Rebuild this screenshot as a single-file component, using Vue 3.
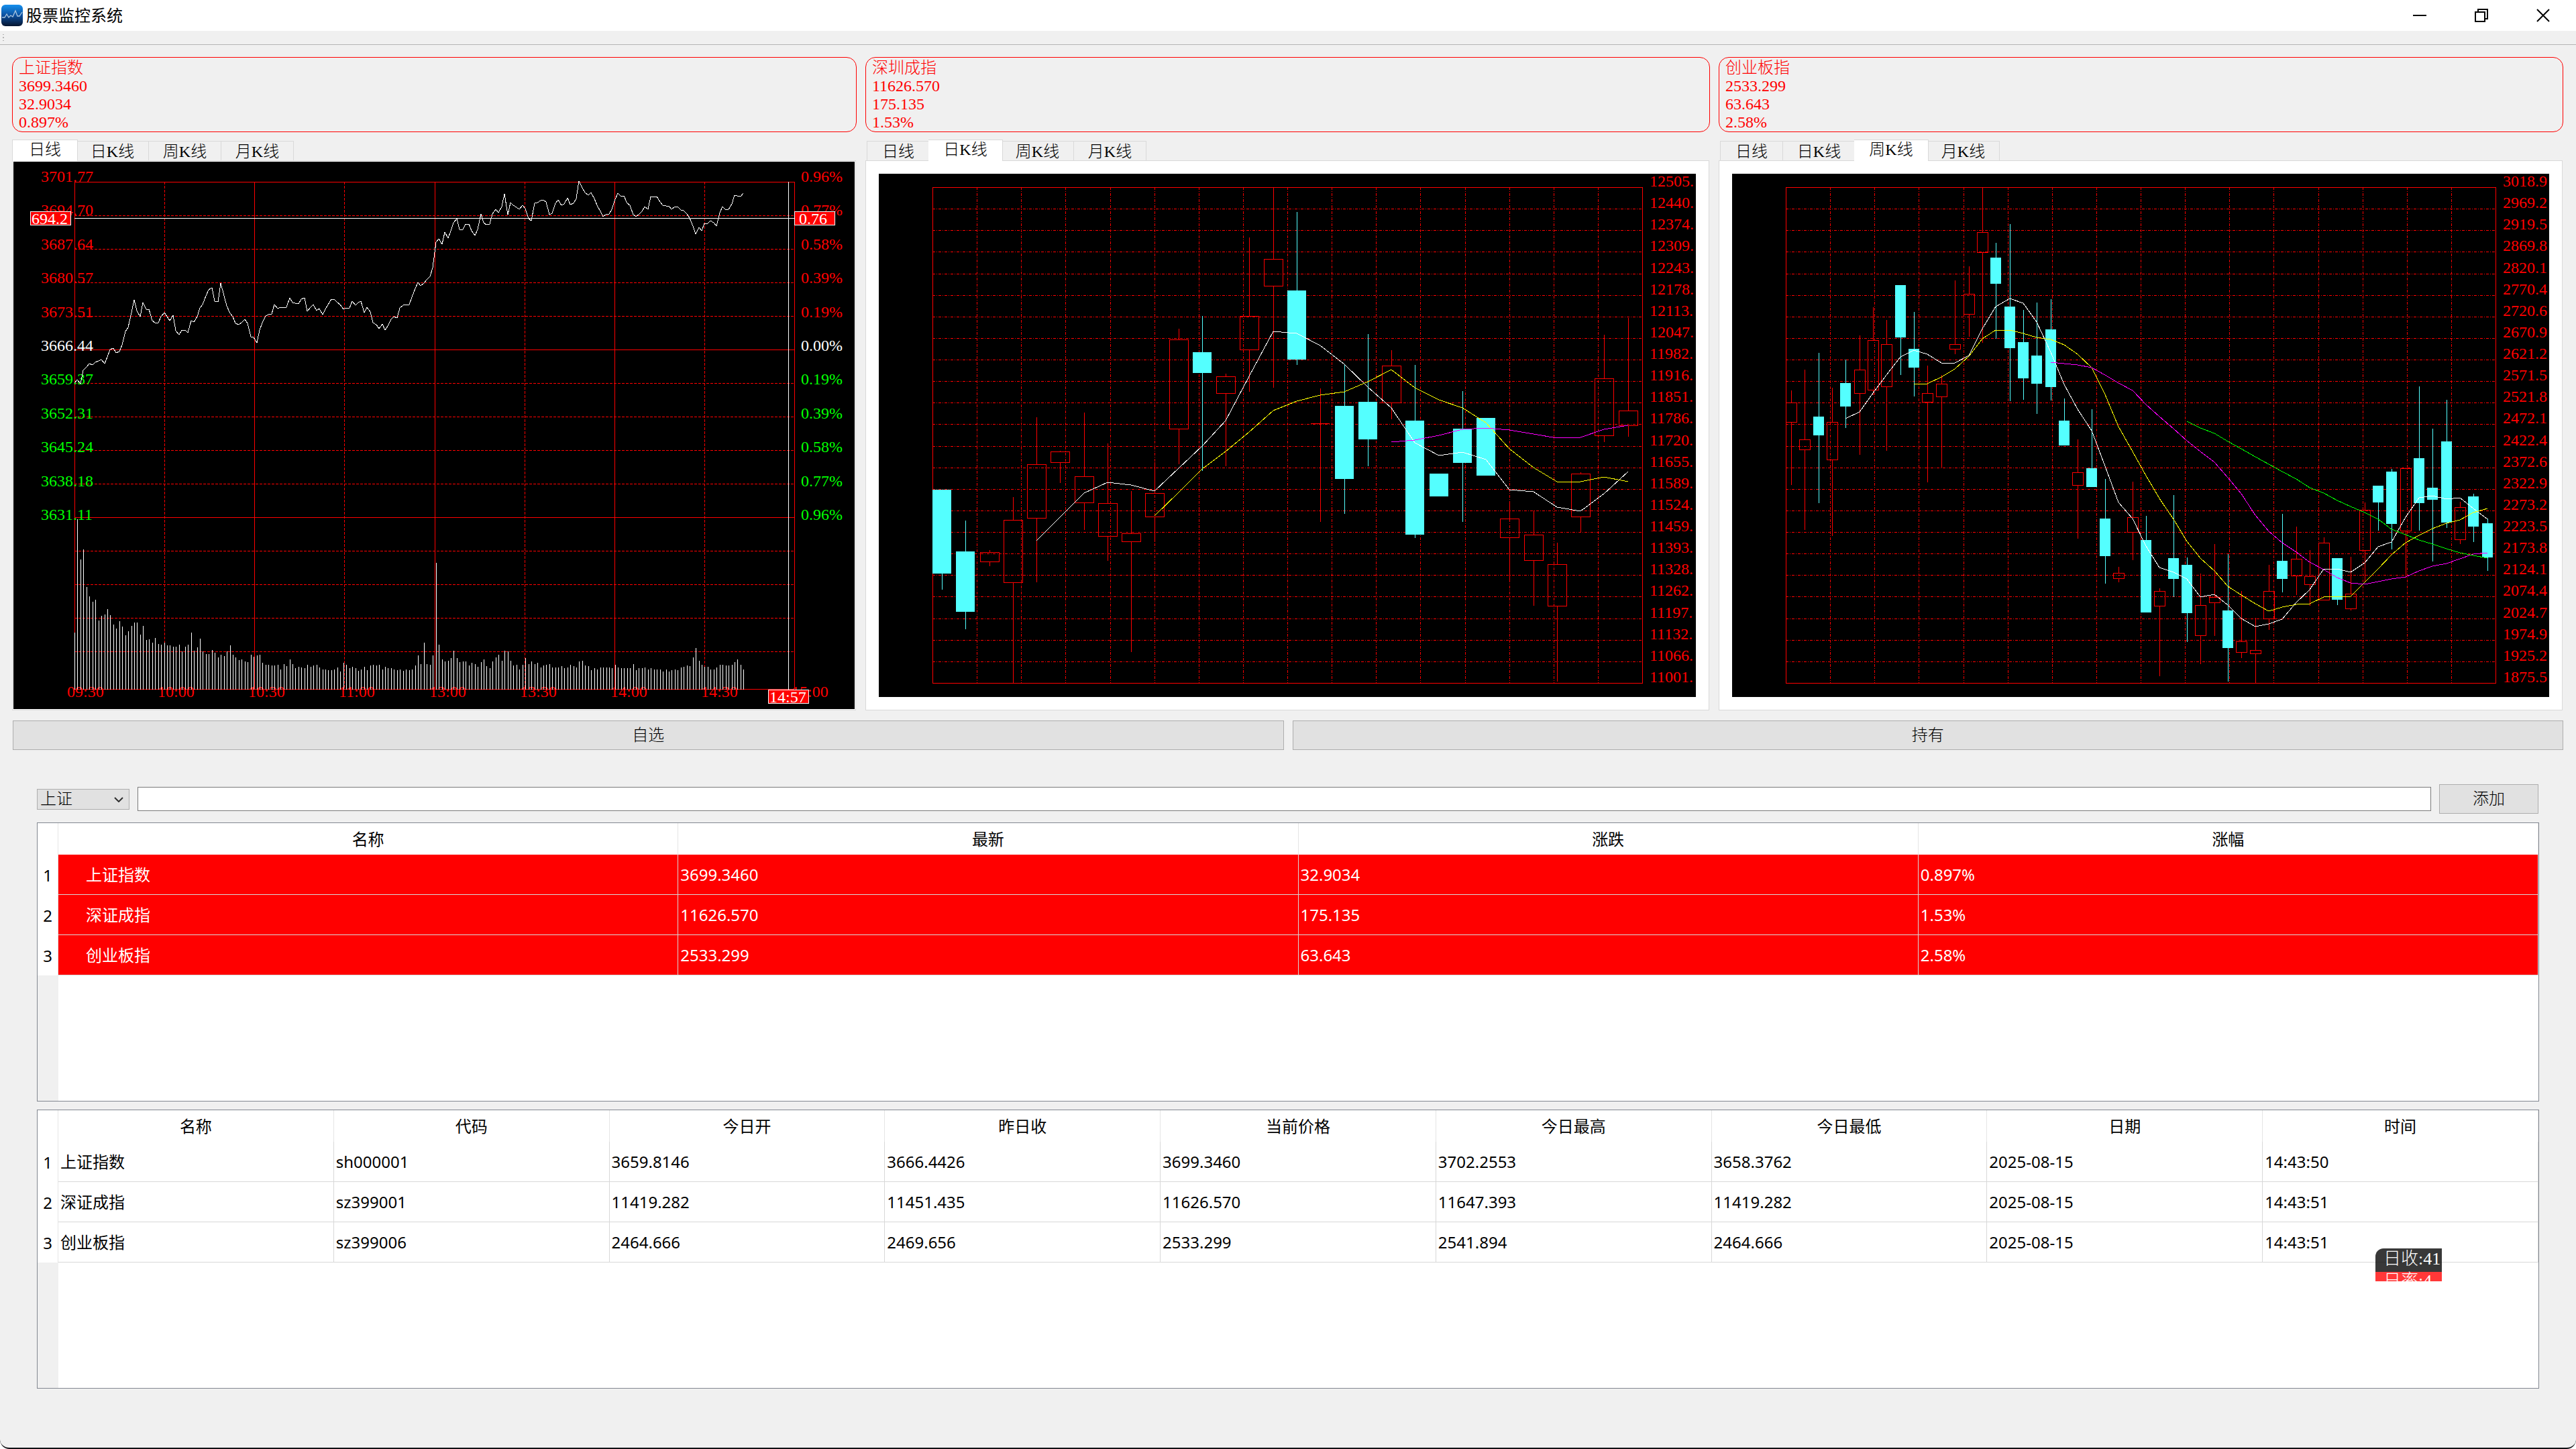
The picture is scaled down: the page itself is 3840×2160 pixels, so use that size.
<script setup>
import { ref } from 'vue'

const indexes = [
  { name: '上证指数', price: '3699.3460', change: '32.9034', percent: '0.897%' },
  { name: '深圳成指', price: '11626.570', change: '175.135', percent: '1.53%' },
  { name: '创业板指', price: '2533.299', change: '63.643', percent: '2.58%' }
]

const tabNames = ['日线', '日K线', '周K线', '月K线']
const activeTabs = ref([0, 1, 2])

const watchHead = ['名称', '最新', '涨跌', '涨幅']
const watchRows = [
  ['上证指数', '3699.3460', '32.9034', '0.897%'],
  ['深证成指', '11626.570', '175.135', '1.53%'],
  ['创业板指', '2533.299', '63.643', '2.58%']
]

const quoteHead = ['名称', '代码', '今日开', '昨日收', '当前价格', '今日最高', '今日最低', '日期', '时间']
const quoteRows = [
  ['上证指数', 'sh000001', '3659.8146', '3666.4426', '3699.3460', '3702.2553', '3658.3762', '2025-08-15', '14:43:50'],
  ['深证成指', 'sz399001', '11419.282', '11451.435', '11626.570', '11647.393', '11419.282', '2025-08-15', '14:43:51'],
  ['创业板指', 'sz399006', '2464.666', '2469.656', '2533.299', '2541.894', '2464.666', '2025-08-15', '14:43:51']
]

const market = ref('上证')
const keyword = ref('')

/* ---- intraday chart: one level per minute, 77 is the top gridline and 1489 the time axis ---- */
const day = { left: 91, right: 1164, top: 30, bottom: 786 }
const dayY = (v) => Math.round(day.top + ((v - 77) * (day.bottom - day.top)) / 1412)
const dayX = (i) => Math.round(day.left + (i * (day.right - day.left)) / 241)

const minutePrices = [
  637, 628, 639, 601, 593, 583, 586, 580, 576, 572, 584, 564, 544, 540, 553, 549, 530, 493, 482, 441,
  406, 435, 453, 414, 432, 432, 463, 469, 469, 453, 441, 452, 464, 448, 492, 502, 489, 490, 497, 463,
  468, 452, 428, 419, 394, 378, 372, 409, 411, 359, 394, 422, 444, 452, 472, 474, 469, 460, 471, 508,
  511, 526, 489, 469, 450, 447, 445, 418, 430, 427, 427, 426, 400, 414, 415, 417, 404, 400, 437, 426,
  418, 436, 430, 446, 432, 418, 404, 404, 413, 418, 432, 428, 428, 410, 420, 413, 410, 442, 427, 440,
  469, 475, 486, 473, 489, 479, 460, 452, 457, 428, 420, 419, 418, 399, 374, 358, 366, 359, 350, 340,
  317, 245, 236, 250, 218, 233, 213, 190, 179, 210, 210, 195, 195, 214, 226, 210, 167, 190, 197, 195,
  167, 154, 163, 147, 111, 169, 135, 143, 148, 153, 143, 152, 180, 185, 136, 134, 129, 128, 133, 169,
  165, 136, 128, 142, 138, 121, 140, 136, 123, 75, 94, 106, 115, 107, 124, 143, 160, 174, 167, 167,
  154, 125, 109, 118, 117, 137, 143, 168, 174, 169, 160, 147, 153, 118, 118, 118, 133, 142, 145, 145,
  154, 147, 146, 155, 158, 166, 178, 200, 222, 204, 213, 193, 192, 185, 191, 200, 163, 147, 155, 153,
  138, 115, 116, 118, 109
]
const minuteVolumes = [
  1333, 1017, 1129, 1101, 1206, 1232, 1247, 1241, 1299, 1286, 1281, 1266, 1284, 1309, 1320, 1301, 1316, 1340, 1329, 1314,
  1305, 1305, 1338, 1314, 1353, 1351, 1361, 1347, 1363, 1365, 1361, 1368, 1368, 1372, 1372, 1366, 1385, 1372, 1365, 1333,
  1383, 1374, 1348, 1385, 1391, 1391, 1381, 1389, 1402, 1394, 1398, 1385, 1368, 1393, 1402, 1409, 1406, 1413, 1415, 1394,
  1400, 1396, 1393, 1417, 1422, 1422, 1424, 1424, 1422, 1435, 1419, 1426, 1407, 1419, 1432, 1428, 1430, 1432, 1422, 1428,
  1424, 1421, 1430, 1434, 1434, 1437, 1437, 1435, 1430, 1441, 1417, 1421, 1432, 1428, 1432, 1439, 1435, 1428, 1437, 1424,
  1422, 1424, 1422, 1434, 1428, 1432, 1432, 1434, 1437, 1434, 1439, 1434, 1437, 1434, 1424, 1396, 1419, 1361, 1419, 1421,
  1396, 1137, 1366, 1406, 1413, 1411, 1404, 1383, 1404, 1415, 1413, 1413, 1424, 1417, 1419, 1428, 1415, 1407, 1426, 1432,
  1413, 1402, 1394, 1411, 1383, 1385, 1411, 1424, 1422, 1434, 1421, 1404, 1419, 1413, 1419, 1417, 1430, 1424, 1421, 1419,
  1430, 1430, 1430, 1426, 1432, 1430, 1422, 1426, 1430, 1413, 1411, 1424, 1426, 1437, 1432, 1434, 1430, 1430, 1430, 1430,
  1432, 1421, 1430, 1432, 1432, 1432, 1432, 1419, 1437, 1432, 1432, 1430, 1435, 1432, 1434, 1434, 1435, 1441, 1435, 1441,
  1437, 1435, 1437, 1430, 1428, 1424, 1426, 1402, 1376, 1411, 1422, 1428, 1428, 1434, 1434, 1430, 1422, 1422, 1424, 1424,
  1422, 1415, 1406, 1422, 1435
]
const dayLine = minutePrices.map((v, i) => `${dayX(i)},${dayY(v)}`).join(' ')
const dayBars = minuteVolumes.map((v, i) => `M${dayX(i)} ${day.bottom + 1}V${dayY(v)}`).join('')

const dayRows = Array.from({ length: 15 }, (_, i) => ({ y: 30 + i * 50, solid: i % 5 === 0 }))
const dayCols = Array.from({ length: 9 }, (_, i) => ({ x: Math.round(91 + i * 134.125), solid: i % 2 === 0 }))
const dayLabelY = (i) => Math.round(30 + i * 50.4)
const tone = (i) => (i < 5 ? '#ff0000' : i === 5 ? '#ffffff' : '#00ff00')
const dayPrices = ['3701.77', '3694.70', '3687.64', '3680.57', '3673.51', '3666.44', '3659.37', '3652.31', '3645.24', '3638.18', '3631.11']
const dayPercents = ['0.96%', '0.77%', '0.58%', '0.39%', '0.19%', '0.00%', '0.19%', '0.39%', '0.58%', '0.77%', '0.96%']
const dayTimes = ['09:30', '10:00', '10:30', '11:00', '13:00', '13:30', '14:00', '14:30', '15:00']

/* ---- candle charts: levels run from 145 (top gridline) to 1493 (bottom gridline) ---- */
const plot = { left: 80, right: 1138, top: 20, bottom: 759 }
const levelY = (v) => Math.round(plot.top + ((v - 145) * (plot.bottom - plot.top)) / 1348)

/* each candle: kind (r = rising, c = falling), high, body top, body bottom, low */
const dailyCandles = [
  ['c', 968, 968, 1196, 1240], ['c', 1052, 1136, 1300, 1347], ['r', 1132, 1137, 1162, 1176],
  ['r', 988, 1049, 1219, 1493], ['r', 771, 898, 1044, 1220], ['r', 861, 863, 892, 950],
  ['r', 758, 931, 1002, 1078], ['r', 841, 1004, 1093, 1161], ['r', 972, 1086, 1108, 1409],
  ['r', 892, 976, 1040, 1109], ['r', 529, 559, 801, 899], ['c', 496, 593, 651, 916],
  ['r', 653, 659, 705, 904], ['r', 281, 495, 586, 702], ['r', 145, 340, 413, 690],
  ['c', 213, 425, 614, 629], ['r', 693, 787, 787, 1056], ['c', 626, 740, 939, 1034],
  ['c', 545, 729, 831, 904], ['r', 589, 630, 730, 777], ['c', 629, 780, 1090, 1099],
  ['c', 923, 923, 986, 986], ['c', 700, 802, 895, 1056], ['c', 773, 773, 930, 930],
  ['r', 1000, 1046, 1098, 1216], ['r', 1025, 1089, 1160, 1284], ['r', 1112, 1170, 1283, 1490],
  ['r', 921, 923, 1040, 1085], ['r', 547, 664, 819, 839], ['r', 500, 752, 792, 824]
]
const dailyAverages = [
  { color: '#ffffff', start: 4, values: [1106, 1042, 976, 948, 955, 972, 910, 849, 780, 660, 537, 542, 575, 626, 688, 746, 840, 875, 866, 886, 968, 973, 1016, 1026, 978, 919] },
  { color: '#ffff00', start: 9, values: [1038, 975, 911, 864, 810, 753, 726, 711, 702, 674, 641, 691, 724, 746, 786, 857, 907, 945, 946, 933, 945] },
  { color: '#ff00ff', start: 19, values: [839, 833, 819, 804, 799, 806, 817, 828, 825, 804, 792] }
]
const dailyLabels = ['12505.', '12440.', '12374.', '12309.', '12243.', '12178.', '12113.', '12047.', '11982.', '11916.', '11851.', '11786.', '11720.', '11655.', '11589.', '11524.', '11459.', '11393.', '11328.', '11262.', '11197.', '11132.', '11066.', '11001.']

const weeklyCandles = [
  ['r', 698, 730, 783, 954], ['r', 642, 831, 858, 1078], ['c', 596, 768, 819, 1005],
  ['r', 691, 783, 885, 1093], ['c', 614, 678, 742, 800], ['r', 549, 641, 705, 873],
  ['r', 471, 561, 695, 711], ['r', 507, 572, 686, 861], ['c', 412, 412, 554, 655],
  ['c', 485, 585, 636, 715], ['r', 631, 705, 728, 948], ['r', 655, 679, 714, 907],
  ['r', 399, 572, 584, 600], ['r', 361, 435, 489, 552], ['r', 145, 267, 322, 568],
  ['c', 297, 337, 408, 557], ['c', 246, 469, 582, 727], ['c', 478, 567, 665, 724],
  ['c', 459, 603, 680, 762], ['c', 450, 531, 689, 725], ['c', 720, 780, 848, 848],
  ['r', 831, 920, 955, 1101], ['c', 748, 910, 961, 961], ['c', 939, 1047, 1149, 1223],
  ['r', 1178, 1193, 1208, 1220], ['r', 946, 1042, 1082, 1160], ['c', 1039, 1105, 1302, 1302],
  ['r', 1236, 1244, 1284, 1475], ['c', 983, 1154, 1211, 1260], ['c', 1152, 1172, 1304, 1382],
  ['r', 1196, 1281, 1363, 1442], ['r', 1116, 1260, 1275, 1366], ['c', 1143, 1296, 1398, 1490],
  ['r', 1243, 1379, 1410, 1426], ['r', 1316, 1403, 1412, 1493], ['r', 1172, 1243, 1317, 1349],
  ['c', 1034, 1161, 1211, 1247], ['r', 1068, 1155, 1202, 1254], ['r', 1132, 1203, 1224, 1284],
  ['r', 1098, 1111, 1266, 1266], ['c', 1154, 1154, 1267, 1282], ['r', 1150, 1250, 1290, 1296],
  ['r', 1003, 1022, 1131, 1220], ['c', 957, 957, 1003, 1079], ['c', 912, 919, 1061, 1130],
  ['r', 908, 909, 1079, 1207], ['c', 686, 882, 1005, 1079], ['c', 802, 963, 995, 1163],
  ['c', 724, 837, 1057, 1072], ['r', 1001, 1015, 1102, 1116], ['c', 979, 986, 1068, 1110],
  ['c', 1047, 1059, 1152, 1189]
]
const weeklyAverages = [
  { color: '#ffffff', start: 4, values: [775, 756, 705, 656, 606, 588, 600, 622, 622, 602, 530, 469, 447, 461, 511, 594, 682, 749, 808, 904, 1003, 1046, 1120, 1179, 1192, 1211, 1259, 1253, 1281, 1318, 1340, 1333, 1320, 1275, 1240, 1182, 1183, 1192, 1166, 1123, 1110, 1043, 990, 984, 993, 989, 1018, 1048] },
  { color: '#ffff00', start: 9, values: [679, 679, 661, 640, 604, 557, 534, 534, 542, 553, 559, 573, 599, 636, 708, 796, 863, 930, 991, 1048, 1109, 1154, 1188, 1230, 1254, 1277, 1297, 1287, 1279, 1278, 1260, 1258, 1257, 1220, 1182, 1145, 1111, 1092, 1074, 1059, 1050, 1030, 1019] },
  { color: '#ff00ff', start: 19, values: [621, 625, 629, 636, 655, 678, 698, 736, 769, 802, 835, 863, 892, 934, 979, 1037, 1080, 1111, 1138, 1164, 1185, 1206, 1221, 1225, 1218, 1210, 1205, 1189, 1176, 1168, 1156, 1143, 1139] },
  { color: '#00ff00', start: 29, values: [782, 800, 815, 836, 856, 878, 898, 919, 938, 962, 977, 997, 1014, 1029, 1048, 1075, 1090, 1105, 1115, 1129, 1140, 1147, 1153] }
]
const weeklyLabels = ['3018.9', '2969.2', '2919.5', '2869.8', '2820.1', '2770.4', '2720.6', '2670.9', '2621.2', '2571.5', '2521.8', '2472.1', '2422.4', '2372.6', '2322.9', '2273.2', '2223.5', '2173.8', '2124.1', '2074.4', '2024.7', '1974.9', '1925.2', '1875.5']

function buildChart(title, candles, averages, labels) {
  const step = (plot.right - plot.left) / candles.length
  const width = Math.round(step * 0.8)
  const center = (i) => Math.round(plot.left + i * step + width / 2)
  return {
    title,
    candles: candles.map(([kind, high, top, bottom, low], i) => ({
      kind,
      x: Math.round(plot.left + i * step),
      y: levelY(top),
      width,
      height: levelY(bottom) - levelY(top),
      wick: `M${center(i)} ${levelY(high)}V${levelY(top)}M${center(i)} ${levelY(bottom)}V${levelY(low)}`
    })),
    lines: averages.map((a) => ({
      color: a.color,
      points: a.values.map((v, i) => `${center(a.start + i)},${levelY(v)}`).join(' ')
    })),
    labels: labels.map((text, i) => ({ text, y: Math.round(plot.top + (i * (plot.bottom - plot.top)) / 23) })),
    cols: Array.from({ length: 15 }, (_, i) => Math.round(plot.left + ((i + 1) * (plot.right - plot.left)) / 16))
  }
}

const candleCharts = [
  null,
  buildChart('深圳成指日K线', dailyCandles, dailyAverages, dailyLabels),
  buildChart('创业板指周K线', weeklyCandles, weeklyAverages, weeklyLabels)
]
</script>

<template>
  <div class="window">
    <header class="titlebar">
      <svg class="logo" viewBox="0 0 32 32" aria-hidden="true">
        <defs>
          <linearGradient id="logo-fill" x1="0" y1="0" x2="0" y2="1">
            <stop offset="0" stop-color="#1590ee" />
            <stop offset="0.5" stop-color="#0c4f9e" />
            <stop offset="1" stop-color="#06142e" />
          </linearGradient>
        </defs>
        <rect width="32" height="32" rx="6" fill="url(#logo-fill)" />
        <path d="M1 19h4l3-5 3 5 3-3 3 2 4-9 3 8 3 0 4-6" fill="none" stroke="#a9c4de" stroke-width="1.3" />
      </svg>
      <h1>股票监控系统</h1>
      <div class="controls">
        <button type="button" aria-label="最小化">
          <svg viewBox="0 0 20 20"><path d="M0 10h20" /></svg>
        </button>
        <button type="button" aria-label="还原">
          <svg viewBox="0 0 20 20"><path d="M1 5h14v14H1zM5 5V1h14v14h-4" /></svg>
        </button>
        <button type="button" aria-label="关闭">
          <svg viewBox="0 0 20 20"><path d="M1 1l18 18M19 1L1 19" /></svg>
        </button>
      </div>
    </header>

    <div class="toolbar"><i></i><i></i><i></i></div>

    <section class="cards">
      <article v-for="item in indexes" :key="item.name" class="card">
        <p>{{ item.name }}</p>
        <p>{{ item.price }}</p>
        <p>{{ item.change }}</p>
        <p>{{ item.percent }}</p>
      </article>
    </section>

    <section class="charts">
      <div v-for="(active, n) in activeTabs" :key="n" class="chart">
        <div class="tabs" role="tablist">
          <button
            v-for="(tab, t) in tabNames"
            :key="tab"
            type="button"
            role="tab"
            :aria-selected="t === active"
            :class="['tab', { active: t === active, short: t === 0 }]"
          >{{ tab }}</button>
        </div>

        <div v-if="n === 0" class="pane flush">
          <svg class="canvas" viewBox="0 0 1254 816" role="img" aria-label="上证指数日线">
            <rect width="1254" height="816" fill="#000" />
            <g class="grid">
              <line v-for="r in dayRows" :key="r.y" :x1="91" :x2="1164" :y1="r.y" :y2="r.y" :class="{ dash: !r.solid }" />
              <line x1="91" x2="1164" y1="786" y2="786" />
              <line v-for="c in dayCols" :key="c.x" :x1="c.x" :x2="c.x" :y1="30" :y2="786" :class="{ dash: !c.solid }" />
            </g>
            <g class="axis">
              <text v-for="(p, i) in dayPrices" :key="p" x="41" :y="dayLabelY(i)" :fill="tone(i)">{{ p }}</text>
              <text v-for="(p, i) in dayPercents" :key="i" x="1174" :y="dayLabelY(i)" :fill="tone(i)">{{ p }}</text>
              <text v-for="(t, i) in dayTimes" :key="t" :x="80 + i * 135" y="798" fill="#ff0000">{{ t }}</text>
            </g>
            <path class="bars" :d="dayBars" />
            <polyline class="trace" :points="dayLine" stroke="#fff" />
            <path class="cursor" d="M91 84H1164M1155 30V787" />
            <g class="tag">
              <rect x="25" y="74" width="60" height="20" />
              <rect x="1164" y="74" width="60" height="20" />
              <rect x="1125" y="787" width="60" height="20" />
              <text x="27" y="93">694.2</text>
              <text x="1171" y="93">0.76</text>
              <text x="1127" y="806">14:57</text>
            </g>
          </svg>
        </div>

        <div v-else class="pane">
          <svg class="canvas" viewBox="0 0 1218 780" role="img" :aria-label="candleCharts[n].title">
            <rect width="1218" height="780" fill="#000" />
            <g class="grid">
              <line v-for="l in candleCharts[n].labels.slice(1, -1)" :key="l.y" x1="80" x2="1138" :y1="l.y" :y2="l.y" class="dashdot" />
              <line v-for="x in candleCharts[n].cols" :key="x" :x1="x" :x2="x" y1="20" y2="759" class="dashdot" />
              <rect x="80" y="20" width="1058" height="739" fill="none" />
            </g>
            <g v-for="(c, i) in candleCharts[n].candles" :key="i" :class="c.kind === 'c' ? 'fall' : 'rise'">
              <path :d="c.wick" />
              <rect v-if="c.height" :x="c.x" :y="c.y" :width="c.width" :height="c.height" />
              <line v-else :x1="c.x" :x2="c.x + c.width" :y1="c.y" :y2="c.y" />
            </g>
            <polyline v-for="l in candleCharts[n].lines" :key="l.color" class="trace" :points="l.points" :stroke="l.color" />
            <g class="axis">
              <text v-for="l in candleCharts[n].labels" :key="l.y" x="1149" :y="l.y - 1" fill="#ff0000">{{ l.text }}</text>
            </g>
          </svg>
        </div>
      </div>
    </section>

    <nav class="switch">
      <button type="button" class="push">自选</button>
      <button type="button" class="push">持有</button>
    </nav>

    <main class="panel">
      <form class="entry" @submit.prevent>
        <span class="combo">
          <select v-model="market" aria-label="市场">
            <option>上证</option>
            <option>深证</option>
          </select>
          <svg viewBox="0 0 14 8" aria-hidden="true"><path d="M1 1l6 6 6-6" /></svg>
        </span>
        <input v-model="keyword" type="text" aria-label="股票代码" />
        <button type="submit" class="push add">添加</button>
      </form>

      <div class="frame">
        <table class="watch">
          <thead>
            <tr>
              <th class="no"></th>
              <th v-for="h in watchHead" :key="h" scope="col">{{ h }}</th>
            </tr>
          </thead>
          <tbody>
            <tr v-for="(row, r) in watchRows" :key="r">
              <th class="no" scope="row">{{ r + 1 }}</th>
              <td v-for="(cell, c) in row" :key="c">{{ cell }}</td>
            </tr>
          </tbody>
        </table>
      </div>

      <div class="frame">
        <table>
          <thead>
            <tr>
              <th class="no"></th>
              <th v-for="h in quoteHead" :key="h" scope="col">{{ h }}</th>
            </tr>
          </thead>
          <tbody>
            <tr v-for="(row, r) in quoteRows" :key="r">
              <th class="no" scope="row">{{ r + 1 }}</th>
              <td v-for="(cell, c) in row" :key="c">{{ cell }}</td>
            </tr>
          </tbody>
        </table>
        <div class="floater">
          <p>日收:41</p>
          <p class="rate">日率:4</p>
        </div>
      </div>
    </main>
  </div>
</template>

<style>
html,
body {
  margin: 0;
  background: #fff;
}
</style>

<style scoped>
.window {
  --song: 'Liberation Serif', 'Noto Sans CJK SC', serif;
  --hei: 'Noto Sans', 'Noto Sans CJK SC', sans-serif;
  box-sizing: border-box;
  display: flex;
  flex-direction: column;
  min-height: 100vh;
  border-bottom: 2px solid #101014;
  border-radius: 0 0 14px 14px;
  background: #f0f0f0;
  color: #000;
  font: 24px/27px var(--song);
}

p,
h1 {
  margin: 0;
}

button,
select,
input {
  box-sizing: border-box;
  margin: 0;
  padding: 0;
  border-radius: 0;
  color: #000;
  font: 300 24px/27px var(--song);
}

.titlebar {
  display: flex;
  align-items: center;
  gap: 5px;
  height: 46px;
  padding: 0 3px 0 2px;
  background: #fff;
}

.logo {
  width: 32px;
  height: 32px;
}

.titlebar h1 {
  flex: 1;
  font: 400 24px/32px var(--hei);
}

.controls {
  display: flex;
}

.controls button {
  display: flex;
  align-items: center;
  justify-content: center;
  width: 92px;
  height: 44px;
  border: 0;
  background: none;
}

.controls svg {
  width: 20px;
  height: 20px;
  fill: none;
  stroke: #000;
  stroke-width: 2;
}

.toolbar {
  box-sizing: border-box;
  display: flex;
  flex-direction: column;
  gap: 3px;
  height: 21px;
  padding: 5px 4px;
  border-bottom: 1px solid #b4b4b4;
}

.toolbar i {
  width: 2px;
  height: 2px;
  background: #b4b4b4;
}

.cards {
  display: grid;
  grid-template-columns: repeat(3, 1fr);
  gap: 13px;
  padding: 18px 19px 11px 18px;
}

.card {
  padding: 2px 9px 0;
  border: 1px solid #ff0000;
  border-radius: 15px;
  color: #ff0000;
  font-weight: 300;
}

.charts {
  display: grid;
  grid-template-columns: repeat(3, 1fr);
  gap: 14px;
  padding: 0 20px 0 18px;
}

.tabs {
  display: flex;
  align-items: flex-end;
  height: 31px;
  padding-left: 2px;
}

.tab {
  width: 108px;
  height: 29px;
  padding-top: 2px;
  border: 1px solid #d9d9d9;
  border-bottom: 0;
  border-left-width: 0;
  background: #f0f0f0;
}

.tab.short {
  width: 94px;
  border-left-width: 1px;
}

.tab.active {
  z-index: 1;
  box-sizing: content-box;
  height: 29px;
  margin: 0 -2px -1px;
  padding: 0 1px 2px;
  background: #fff;
}

.pane {
  padding: 19px;
  border: 1px solid #d9d9d9;
  background: #fff;
}

.pane.flush {
  padding: 1px;
}

.canvas {
  display: block;
  width: 100%;
  height: auto;
  fill: none;
  stroke-width: 1;
  shape-rendering: crispEdges;
}

.grid {
  stroke: #ff0000;
}

.dash {
  stroke-dasharray: 4 2;
}

.dashdot {
  stroke-dasharray: 4 2 1 2;
}

.axis,
.tag text {
  font: 24px var(--song);
}

.bars,
.cursor {
  stroke: #fff;
}

.tag rect {
  fill: #ff0000;
  stroke: #fff;
}

.tag text {
  fill: #fff;
}

.rise {
  stroke: #ff0000;
}

.fall {
  fill: #54ffff;
  stroke: #54ffff;
}

.fall rect {
  stroke: none;
}

.switch {
  display: grid;
  grid-template-columns: 1fr 1fr;
  gap: 13px;
  padding: 15px 19px 0;
}

.push {
  height: 44px;
  padding-top: 1px;
  border: 1px solid #adadad;
  background: #e1e1e1;
}

.panel {
  display: flex;
  flex: 1;
  flex-direction: column;
  gap: 12px;
  padding: 51px 55px 88px;
}

.entry {
  display: flex;
  align-items: center;
  gap: 12px;
  padding: 0 1px 1px 0;
}

.combo {
  position: relative;
  width: 138px;
}

.combo select {
  display: block;
  width: 100%;
  height: 31px;
  padding: 0 4px;
  border: 1px solid #adadad;
  background: #e1e1e1;
  appearance: none;
}

.combo svg {
  position: absolute;
  top: 12px;
  right: 9px;
  width: 14px;
  height: 8px;
  fill: none;
  stroke: #303030;
  stroke-width: 2;
  pointer-events: none;
}

.entry input {
  flex: 1;
  height: 36px;
  padding: 0 6px;
  border: 1px solid #7a7a7a;
  background: #fff;
}

.add {
  width: 148px;
}

.frame {
  position: relative;
  flex: 1;
  border: 1px solid #828790;
  background: linear-gradient(to right, #f0f0f0 31px, #fff 31px);
}

table {
  width: 100%;
  border-spacing: 0;
  table-layout: fixed;
  font: 24px/32px var(--hei);
}

th,
td {
  box-sizing: border-box;
  height: 60px;
  padding: 1px 3px 0;
  border-right: 1px solid #d8d8d8;
  background: #fff;
  font-weight: 400;
  text-align: left;
}

td {
  border-bottom: 1px solid #d8d8d8;
}

thead th {
  height: 47px;
  border-color: #e5e5e5;
  text-align: center;
}

.no {
  width: 31px;
  padding: 1px 0 0;
  border-color: #e5e5e5;
  text-align: center;
}

.watch td {
  background: #ff0000;
  color: #fff;
}

.watch td:nth-child(2) {
  padding-left: 41px;
}

.floater {
  position: absolute;
  top: 206px;
  right: 144px;
  width: 99px;
  height: 49px;
  overflow: hidden;
  border-radius: 12px 0 0;
  background: rgba(0, 0, 0, 0.78);
  color: #fff;
  font-size: 26px;
  font-weight: 300;
  line-height: 31px;
  white-space: nowrap;
}

.floater p {
  height: 35px;
  padding-left: 12px;
}

.floater .rate {
  background: #ff3838;
  line-height: 27px;
}
</style>
